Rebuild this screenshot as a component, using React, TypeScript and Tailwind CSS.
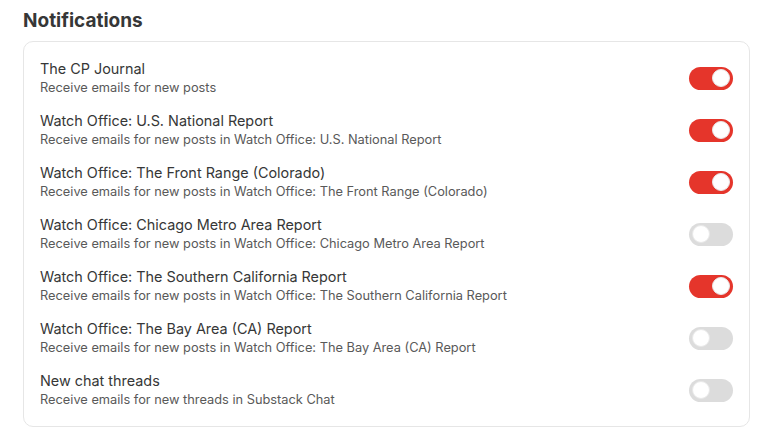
import { useState } from 'react';

const items = [
  { title: 'The CP Journal', desc: 'Receive emails for new posts', on: true },
  { title: 'Watch Office: U.S. National Report', desc: 'Receive emails for new posts in Watch Office: U.S. National Report', on: true },
  { title: 'Watch Office: The Front Range (Colorado)', desc: 'Receive emails for new posts in Watch Office: The Front Range (Colorado)', on: true },
  { title: 'Watch Office: Chicago Metro Area Report', desc: 'Receive emails for new posts in Watch Office: Chicago Metro Area Report', on: false },
  { title: 'Watch Office: The Southern California Report', desc: 'Receive emails for new posts in Watch Office: The Southern California Report', on: true },
  { title: 'Watch Office: The Bay Area (CA) Report', desc: 'Receive emails for new posts in Watch Office: The Bay Area (CA) Report', on: false },
  { title: 'New chat threads', desc: 'Receive emails for new threads in Substack Chat', on: false },
];

function Toggle({ on, onClick }: { on: boolean; onClick: () => void }) {
  return (
    <button
      onClick={onClick}
      className={`flex h-[23px] w-[44px] shrink-0 items-center rounded-full px-[3px] ${
        on ? 'justify-end bg-[#e5352b]' : 'justify-start bg-[#dcdcdc]'
      }`}
    >
      <span className="h-[18px] w-[18px] rounded-full border border-[#e8e8e8] bg-white" />
    </button>
  );
}

export default function App() {
  const [state, setState] = useState(items.map((i) => i.on));

  return (
    <div className="min-h-screen bg-white pl-[23px] pr-[20px] pt-[8px] font-['Inter','Liberation_Sans',sans-serif]">
      <h2 className="text-[19px] font-bold leading-[26px] text-[#363737]">Notifications</h2>
      <div className="mt-[7px] rounded-[10px] border border-[#e6e6e6] px-[16px] py-[10px]">
        {items.map((item, i) => (
          <div key={item.title} className="flex h-[52px] items-center justify-between">
            <div>
              <div className="text-[14.4px] leading-[20px] text-[#363737]">{item.title}</div>
              <div className="text-[12.8px] leading-[18px] text-[#595959]">{item.desc}</div>
            </div>
            <Toggle
              on={state[i]}
              onClick={() => setState((s) => s.map((v, j) => (j === i ? !v : v)))}
            />
          </div>
        ))}
      </div>
    </div>
  );
}
